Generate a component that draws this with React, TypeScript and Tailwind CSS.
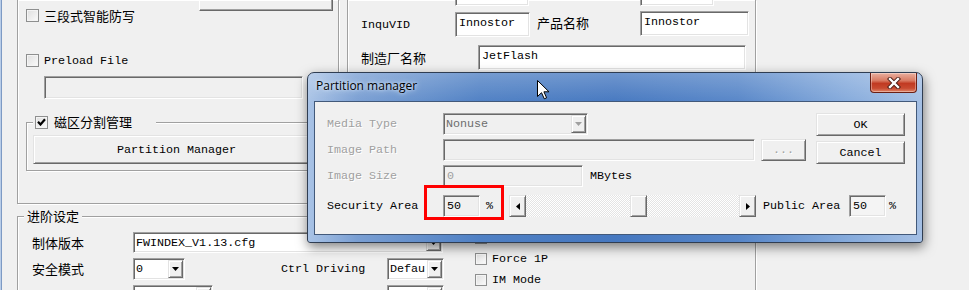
import React from "react";

const mono = "font-['Liberation_Mono',monospace] text-[11.7px] leading-[14px] whitespace-nowrap";
const cjk = "font-['Noto_Sans_CJK_SC',sans-serif] text-[13px] leading-[16px] whitespace-nowrap";

// classic 3d edges
const raised =
    "border border-t-[#e3e3e3] border-l-[#e3e3e3] border-r-[#696969] border-b-[#696969] shadow-[inset_1px_1px_0_#ffffff,inset_-1px_-1px_0_#a0a0a0] bg-[#f0f0f0]";
const sunken =
    "border border-t-[#a0a0a0] border-l-[#a0a0a0] border-r-white border-b-white shadow-[inset_1px_1px_0_#696969,inset_-1px_-1px_0_#e3e3e3]";
const etched = "border-[#a0a0a0] shadow-[inset_1px_1px_0_#ffffff,1px_1px_0_#ffffff]";
const disabledText = "text-[#a0a0a0] [text-shadow:1px_1px_0_#ffffff]";

function Check({ checked = false, small = false }: { checked?: boolean; small?: boolean }) {
    return (
        <span
            className={`${small ? "h-[12px] w-[12px]" : "h-[13px] w-[13px]"} relative flex shrink-0 items-center justify-center border border-[#8e8f8f] bg-[linear-gradient(135deg,#dedede,#fbfbfb)] shadow-[inset_0_0_0_1px_#f4f4f4]`}
        >
            {checked && (
                <svg width="9" height="8" viewBox="0 0 9 8">
                    <path d="M1 3.8 L3.5 6.5 L8 1.2" fill="none" stroke="#000" strokeWidth="2.2" />
                </svg>
            )}
        </span>
    );
}

function Arrow({ dir, color = "#000" }: { dir: "down" | "left" | "right"; color?: string }) {
    if (dir === "down")
        return (
            <svg width="7" height="4" viewBox="0 0 7 4">
                <polygon points="0,0 7,0 3.5,4" fill={color} />
            </svg>
        );
    if (dir === "left")
        return (
            <svg width="4" height="7" viewBox="0 0 4 7">
                <polygon points="4,0 4,7 0,3.5" fill={color} />
            </svg>
        );
    return (
        <svg width="4" height="7" viewBox="0 0 4 7">
            <polygon points="0,0 0,7 4,3.5" fill={color} />
        </svg>
    );
}

function Combo({
    className,
    text,
    disabled = false,
}: {
    className: string;
    text: string;
    disabled?: boolean;
}) {
    return (
        <div className={`${sunken} ${disabled ? "bg-[#f0f0f0]" : "bg-white"} flex ${className}`}>
            <span className={`${mono} flex-1 overflow-hidden pl-[2px] pt-[3px] ${disabled ? "text-[#6d6d6d]" : ""}`}>
                {text}
            </span>
            <span className={`${raised} my-[1px] mr-[1px] flex w-[15px] items-center justify-center`}>
                <Arrow dir="down" color={disabled ? "#a0a0a0" : "#000"} />
            </span>
        </div>
    );
}

function Field({ className, text = "", bg = "bg-white" }: { className: string; text?: string; bg?: string }) {
    return (
        <div className={`${sunken} ${bg} ${className}`}>
            <span className={`${mono} block pl-[3px] pt-[3px]`}>{text}</span>
        </div>
    );
}

function LeftGroup() {
    return (
        <div className={`flex h-[204px] w-[322px] shrink-0 flex-col border-x border-b ${etched}`}>
            <div className="ml-[181px] h-[11px] w-[134px] border-x border-b border-l-white border-r-[#696969] border-b-[#696969] shadow-[inset_-1px_-1px_0_#a0a0a0]" />
            <div className="mt-[-2px] flex h-[13px] items-center pl-[8px]">
                <Check />
                <span className={`${cjk} ml-[5px]`}>三段式智能防写</span>
            </div>
            <div className="mt-[32px] flex h-[13px] items-center pl-[8px]">
                <Check />
                <span className={`${mono} ml-[5px]`}>Preload File</span>
            </div>
            <Field className="ml-[26px] mt-[9px] h-[23px] w-[259px]" bg="bg-[#f0f0f0]" />
            <fieldset className={`ml-[8px] mt-[15px] w-[301px] border pb-[6px] ${etched}`}>
                <legend className="ml-[6px] flex items-center bg-[#f0f0f0] pl-[2px] pr-[24px]">
                    <Check checked />
                    <span className={`${cjk} ml-[6px]`}>磁区分割管理</span>
                </legend>
                <div className={`${raised} ml-[6px] mt-[5px] flex h-[29px] w-[287px] items-center justify-center`}>
                    <span className={mono}>Partition Manager</span>
                </div>
            </fieldset>
        </div>
    );
}

function MiddleGroup() {
    return (
        <div className={`ml-[8px] flex h-[204px] w-[409px] shrink-0 flex-col border-x border-b ${etched}`}>
            <div className="mt-[-16px] flex">
                <Field className="ml-[107px] h-[22px] w-[74px]" />
                <Field className="ml-[111px] h-[22px] w-[74px]" />
            </div>
            <div className="mt-[5px] flex items-start">
                <div className={`${mono} flex h-[25px] w-[107px] items-center pl-[13px] pt-[3px]`}>InquVID</div>
                <Field className="mt-[1px] h-[25px] w-[75px]" text="Innostor" />
                <div className={`${cjk} ml-[7px] flex h-[24px] w-[103px] items-center`}>产品名称</div>
                <Field className="h-[25px] w-[109px]" text="Innostor" />
            </div>
            <div className="mt-[8px] flex items-start">
                <div className={`${cjk} flex h-[25px] w-[130px] items-center pl-[13px]`}>制造厂名称</div>
                <Field className="h-[25px] w-[268px]" text="JetFlash" />
            </div>
        </div>
    );
}

function Advanced() {
    return (
        <fieldset className={`mt-[4px] h-[120px] w-[739px] border ${etched}`}>
            <legend className={`${cjk} ml-[6px] bg-[#f0f0f0] px-[3px]`}>进阶设定</legend>
            <div className="mt-[8px] flex items-start">
                <div className="flex flex-col pl-[14px]">
                    <div className="flex h-[21px] items-center">
                        <span className={`${cjk} w-[101px]`}>制体版本</span>
                        <Combo className="h-[21px] w-[310px]" text="FWINDEX_V1.13.cfg" />
                    </div>
                    <div className="mt-[5px] flex h-[22px] items-center">
                        <span className={`${cjk} w-[101px]`}>安全模式</span>
                        <Combo className="h-[22px] w-[52px]" text="0" />
                        <span className={`${mono} ml-[96px] w-[106px]`}>Ctrl Driving</span>
                        <Combo className="h-[22px] w-[57px]" text="Defau" />
                    </div>
                    <div className="mt-[5px] flex h-[22px] items-center">
                        <span className={`${mono} w-[101px]`}>Pin Mode</span>
                        <Combo className="h-[22px] w-[80px]" text="" />
                        <span className={`${mono} ml-[68px] w-[106px]`}>Fl Switch</span>
                        <Combo className="h-[22px] w-[57px]" text="" />
                    </div>
                </div>
                <div className="ml-[31px] flex flex-col gap-[9px]">
                    {["Gpio Pg", "Force 1P", "IM Mode"].map((t) => (
                        <div key={t} className="flex h-[12px] items-center">
                            <Check small />
                            <span className={`${mono} ml-[5px]`}>{t}</span>
                        </div>
                    ))}
                </div>
            </div>
        </fieldset>
    );
}

function Dialog() {
    return (
        <div className="absolute left-[307px] top-[72px] flex h-[171px] w-[616px] flex-col rounded-t-[7px] rounded-b-[3px] border border-[#2f3d52] bg-[linear-gradient(180deg,rgba(255,255,255,0.22)_0%,rgba(255,255,255,0)_18%),linear-gradient(90deg,#a9c3e6_0%,#7a9fd3_8%,#4f80c4_28%,#4678c0_50%,#5786c8_70%,#86abdc_88%,#a4bfe4_100%)] shadow-[1px_4px_12px_rgba(0,0,0,0.5)]">
            {/* title bar */}
            <div className="flex h-[28px] shrink-0 items-start justify-between">
                <span className="pl-[8px] pt-[5px] font-['Open_Sans',sans-serif] text-[12px] leading-[16px] text-black [text-shadow:0_0_6px_#dbe8f8,0_0_3px_#dbe8f8]">
                    Partition manager
                </span>
                <div className="mr-[5px] flex h-[20px] w-[47px] items-center justify-center rounded-b-[4px] border border-t-0 border-[#6b1f14] bg-[linear-gradient(180deg,#eab0a0_0%,#d97a62_40%,#c13a22_55%,#c84a30_80%,#e0866a_100%)] shadow-[inset_0_0_0_1px_rgba(255,255,255,0.35)]">
                    <svg width="14" height="12" viewBox="0 0 14 12">
                        <path d="M3 2 L11 10 M11 2 L3 10" stroke="#4a1a12" strokeWidth="4.2" strokeLinecap="square" />
                        <path d="M3 2 L11 10 M11 2 L3 10" stroke="#ffffff" strokeWidth="2.4" strokeLinecap="square" />
                    </svg>
                </div>
            </div>
            {/* client area */}
            <div className="ml-[6px] mr-[5px] flex h-[134px] flex-col border border-[#42597a] bg-[#f0f0f0]">
                <div className="flex pt-[11px]">
                    <div className="flex flex-col pl-[12px]">
                        <div className="flex h-[22px] items-center">
                            <span className={`${mono} ${disabledText} w-[116px]`}>Media Type</span>
                            <Combo className="h-[22px] w-[145px]" text="Nonuse" disabled />
                        </div>
                        <div className="mt-[4px] flex h-[22px] items-center">
                            <span className={`${mono} ${disabledText} w-[116px]`}>Image Path</span>
                            <Field className="h-[22px] w-[312px]" bg="bg-[#f0f0f0]" />
                            <div className={`${raised} ml-[6px] flex h-[22px] w-[45px] items-center justify-center`}>
                                <span className={`${mono} ${disabledText}`}>...</span>
                            </div>
                        </div>
                        <div className="mt-[4px] flex h-[22px] items-center">
                            <span className={`${mono} ${disabledText} w-[116px]`}>Image Size</span>
                            <div className={`${sunken} h-[22px] w-[140px] bg-[#f0f0f0]`}>
                                <span className={`${mono} block pl-[3px] pt-[3px] text-[#a0a0a0]`}>0</span>
                            </div>
                            <span className={`${mono} ml-[7px]`}>MBytes</span>
                        </div>
                    </div>
                    <div className="ml-[10px] flex flex-col gap-[5px]">
                        <div className={`${raised} flex h-[23px] w-[89px] items-center justify-center`}>
                            <span className={mono}>OK</span>
                        </div>
                        <div className={`${raised} flex h-[23px] w-[89px] items-center justify-center`}>
                            <span className={mono}>Cancel</span>
                        </div>
                    </div>
                </div>
                <div className="mt-[8px] flex h-[22px] items-center pl-[12px]">
                    <span className={`${mono} w-[116px]`}>Security Area</span>
                    <div className="relative">
                        <Field className="h-[22px] w-[37px]" text="50" bg="bg-[#f0f0f0]" />
                        <div className="absolute left-[-19px] top-[-10px] h-[35px] w-[80px] border-[3px] border-[#ff0000]" />
                    </div>
                    <span className={`${mono} ml-[6px]`}>%</span>
                    <div className="ml-[16px] flex h-[22px] w-[247px]">
                        <div className={`${raised} flex w-[17px] items-center justify-center`}>
                            <Arrow dir="left" />
                        </div>
                        <div className="flex flex-1 bg-[image:repeating-conic-gradient(#ffffff_0_25%,#e4e4e4_0_50%)] bg-[length:2px_2px]">
                            <div className={`${raised} ml-[104px] w-[17px]`} />
                        </div>
                        <div className={`${raised} flex w-[17px] items-center justify-center`}>
                            <Arrow dir="right" />
                        </div>
                    </div>
                    <span className={`${mono} ml-[7px] w-[86px]`}>Public Area</span>
                    <Field className="h-[22px] w-[37px]" text="50" bg="bg-[#f4f4f4]" />
                    <span className={`${mono} ml-[3px]`}>%</span>
                </div>
            </div>
        </div>
    );
}

function Cursor() {
    return (
        <svg className="absolute left-[537px] top-[80px]" width="13" height="20" viewBox="0 0 13 20">
            <polygon
                points="0.5,0.5 0.5,16.5 4.5,12.7 7.3,18.8 9.6,17.8 6.9,11.8 12,11.8"
                fill="#ffffff"
                stroke="#000000"
                strokeWidth="1"
                strokeLinejoin="miter"
            />
        </svg>
    );
}

export default function App() {
    return (
        <div className="relative h-[290px] w-[969px] overflow-hidden bg-[#f0f0f0] text-black">
            <div className="flex h-full">
                <div className="h-full w-[2px] shrink-0 border-l border-[#b9cde8] bg-[#7d9ac4]" />
                <div className="flex flex-col pl-[15px]">
                    <div className="flex">
                        <LeftGroup />
                        <MiddleGroup />
                    </div>
                    <Advanced />
                </div>
            </div>
            <Dialog />
            <Cursor />
        </div>
    );
}
